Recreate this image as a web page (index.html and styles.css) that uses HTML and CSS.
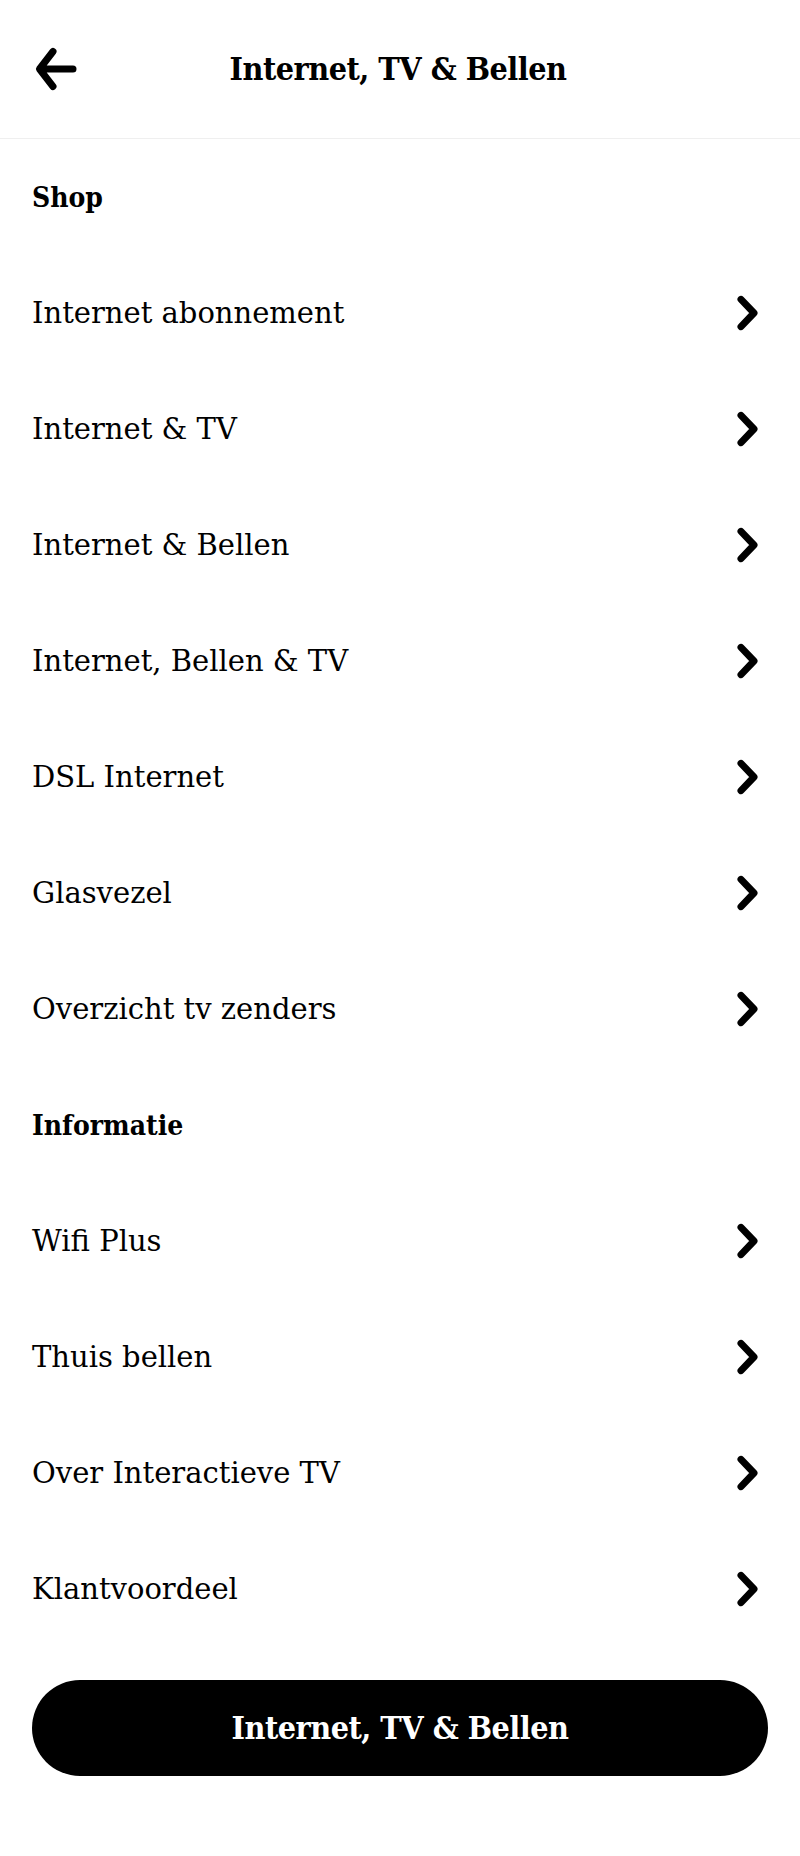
FILE: index.html
```html
<!DOCTYPE html>
<html lang="nl">
<head>
<meta charset="utf-8">
<title>Internet, TV &amp; Bellen</title>
<link rel="stylesheet" href="styles.css">
</head>
<body>
<div class="page">
  <header class="topbar">
    <button class="back" aria-label="Terug">
      <svg viewBox="0 0 48 48" width="48" height="48"><path d="M21 6.5 L7.5 24 L21 41.5 M8 24 H41" fill="none" stroke="#000" stroke-width="7" stroke-linecap="round" stroke-linejoin="round"/></svg>
    </button>
    <h1 class="title">Internet, TV &amp; Bellen</h1>
    <span class="spacer"></span>
  </header>

  <nav class="menu">
    <div class="section">Shop</div>
    <a class="item" href="#"><span>Internet abonnement</span><svg class="chev" viewBox="0 0 40 40"><path d="M13 6.4 L26 20 L13 33.6" fill="none" stroke="#000" stroke-width="7" stroke-linecap="round" stroke-linejoin="round"/></svg></a>
    <a class="item" href="#"><span>Internet &amp; TV</span><svg class="chev" viewBox="0 0 40 40"><path d="M13 6.4 L26 20 L13 33.6" fill="none" stroke="#000" stroke-width="7" stroke-linecap="round" stroke-linejoin="round"/></svg></a>
    <a class="item" href="#"><span>Internet &amp; Bellen</span><svg class="chev" viewBox="0 0 40 40"><path d="M13 6.4 L26 20 L13 33.6" fill="none" stroke="#000" stroke-width="7" stroke-linecap="round" stroke-linejoin="round"/></svg></a>
    <a class="item" href="#"><span>Internet, Bellen &amp; TV</span><svg class="chev" viewBox="0 0 40 40"><path d="M13 6.4 L26 20 L13 33.6" fill="none" stroke="#000" stroke-width="7" stroke-linecap="round" stroke-linejoin="round"/></svg></a>
    <a class="item" href="#"><span>DSL Internet</span><svg class="chev" viewBox="0 0 40 40"><path d="M13 6.4 L26 20 L13 33.6" fill="none" stroke="#000" stroke-width="7" stroke-linecap="round" stroke-linejoin="round"/></svg></a>
    <a class="item" href="#"><span>Glasvezel</span><svg class="chev" viewBox="0 0 40 40"><path d="M13 6.4 L26 20 L13 33.6" fill="none" stroke="#000" stroke-width="7" stroke-linecap="round" stroke-linejoin="round"/></svg></a>
    <a class="item" href="#"><span>Overzicht tv zenders</span><svg class="chev" viewBox="0 0 40 40"><path d="M13 6.4 L26 20 L13 33.6" fill="none" stroke="#000" stroke-width="7" stroke-linecap="round" stroke-linejoin="round"/></svg></a>

    <div class="section">Informatie</div>
    <a class="item" href="#"><span>Wifi Plus</span><svg class="chev" viewBox="0 0 40 40"><path d="M13 6.4 L26 20 L13 33.6" fill="none" stroke="#000" stroke-width="7" stroke-linecap="round" stroke-linejoin="round"/></svg></a>
    <a class="item" href="#"><span>Thuis bellen</span><svg class="chev" viewBox="0 0 40 40"><path d="M13 6.4 L26 20 L13 33.6" fill="none" stroke="#000" stroke-width="7" stroke-linecap="round" stroke-linejoin="round"/></svg></a>
    <a class="item" href="#"><span>Over Interactieve TV</span><svg class="chev" viewBox="0 0 40 40"><path d="M13 6.4 L26 20 L13 33.6" fill="none" stroke="#000" stroke-width="7" stroke-linecap="round" stroke-linejoin="round"/></svg></a>
    <a class="item" href="#"><span>Klantvoordeel</span><svg class="chev" viewBox="0 0 40 40"><path d="M13 6.4 L26 20 L13 33.6" fill="none" stroke="#000" stroke-width="7" stroke-linecap="round" stroke-linejoin="round"/></svg></a>
  </nav>

  <div class="footer">
    <a class="cta" href="#">Internet, TV &amp; Bellen</a>
  </div>
</div>
</body>
</html>
```
FILE: styles.css
```css
* { box-sizing: border-box; }
html, body { margin: 0; padding: 0; background: #fff; }
body {
  font-family: "DejaVu Serif", "Liberation Serif", serif;
  color: #000;
}
.page { width: 800px; }
.topbar {
  height: 139px;
  border-bottom: 1px solid #efefef;
  display: flex;
  align-items: center;
  padding: 0 32px 0 28px;
}
.back {
  width: 56px; height: 56px;
  border: 0; background: none; padding: 0;
  display: flex; align-items: center; justify-content: center;
}
.back svg { display: block; width: 48px; height: 48px; }
.title {
  flex: 1;
  margin: 0;
  text-align: center;
  font-size: 32px;
  font-weight: 700;
  font-stretch: condensed;
  letter-spacing: -0.5px;
}
.spacer { width: 56px; }
.menu { display: flex; flex-direction: column; }
.section, .item {
  height: 116px;
  display: flex;
  align-items: center;
  padding: 0 32px;
  font-size: 29px;
}
.section { font-size: 28px; font-weight: 700; font-stretch: condensed; }
.item {
  justify-content: space-between;
  color: #000;
  text-decoration: none;
}
.chev { width: 40px; height: 40px; display: block; }
.footer { padding: 33px 32px 80px; }
.cta {
  display: flex;
  align-items: center;
  justify-content: center;
  height: 96px;
  border-radius: 48px;
  background: #000;
  color: #fff;
  text-decoration: none;
  font-size: 32px;
  font-weight: 700;
  font-stretch: condensed;
  letter-spacing: -0.5px;
}
```
